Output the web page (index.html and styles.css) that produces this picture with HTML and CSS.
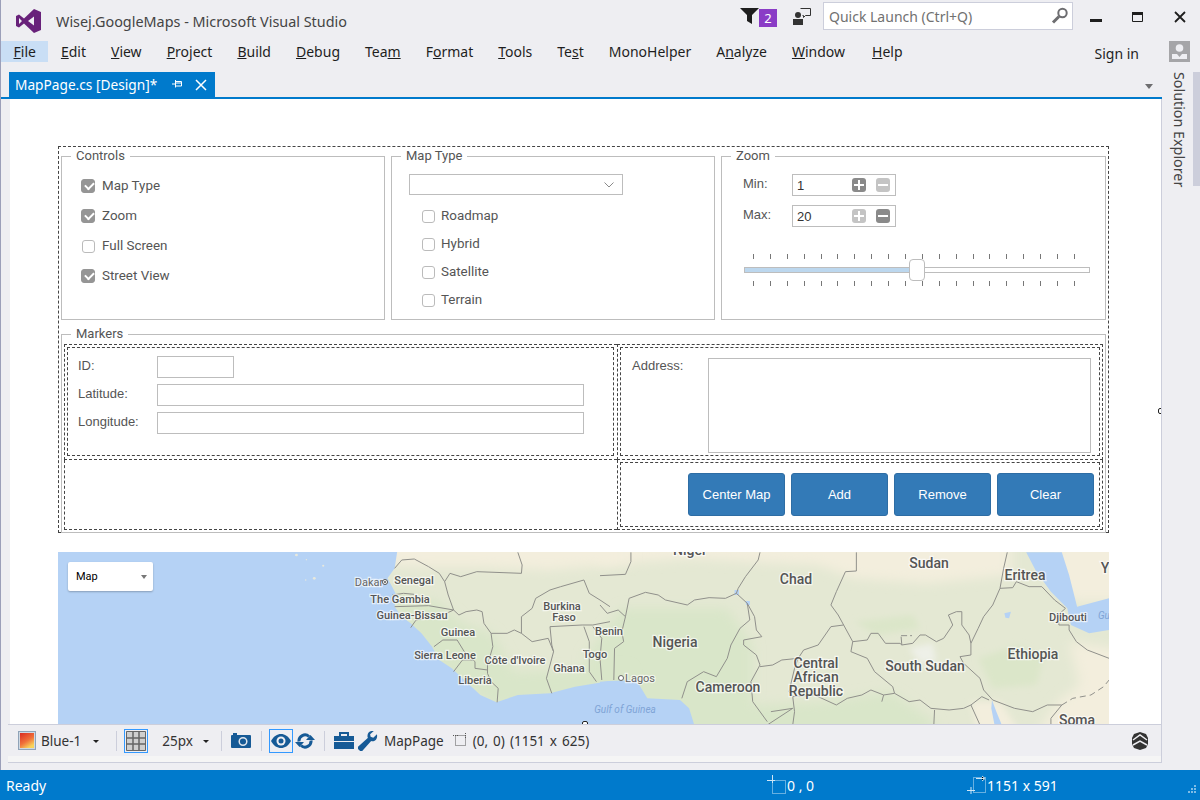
FILE: index.html
```html
<!DOCTYPE html>
<html lang="en">
<head>
<meta charset="utf-8">
<title>Wisej.GoogleMaps - Microsoft Visual Studio</title>
<link rel="stylesheet" href="styles.css">
</head>
<body>
<div class="window">
  <header class="titlebar">
    <svg class="vs-logo" width="28" height="28" viewBox="0 0 28 28"><path fill="#68217a" d="M2 9l3-1.500 5 4L20 2l7 3v18l-7 3-10-9.500-5 4-3-1.500zM5 11v6l3-3zM14 14l6 4.500v-9z"/></svg>
    <div class="app-title">Wisej.GoogleMaps - Microsoft Visual Studio</div>
    <div class="title-right">
      <svg class="ico-filter" width="19" height="18" viewBox="0 0 19 18"><path fill="#1e1e1e" d="M0 1h19l-7 7v9l-5-3V8z"/></svg>
      <span class="badge">2</span>
      <svg class="ico-feedback" width="18" height="18" viewBox="0 0 18 18"><circle cx="5" cy="8" r="3" fill="#333"/><path fill="#333" d="M0 12h10v6H0z"/><path fill="none" stroke="#333" d="M7.500 1.500h10v7h-5l-2 2v-2h-1"/></svg>
      <div class="quick"><span>Quick Launch (Ctrl+Q)</span><svg width="18" height="18" viewBox="0 0 18 18"><circle cx="11.500" cy="6" r="4.200" fill="none" stroke="#6d6d70" stroke-width="2"/><path stroke="#6d6d70" stroke-width="3" d="M8 9.500l-6 6"/></svg></div>
      <div class="win-btns">
        <svg width="12" height="12" viewBox="0 0 12 12"><path fill="#1e1e1e" d="M0 8h12v3H0z"/></svg>
        <svg width="12" height="12" viewBox="0 0 12 12"><path fill="none" stroke="#1e1e1e" d="M.5 2.500h10v8H.5z"/><path fill="#1e1e1e" d="M0 1h11v3H0z"/></svg>
        <svg width="12" height="12" viewBox="0 0 12 12"><path stroke="#1e1e1e" stroke-width="1.800" d="M1 1l10 10M11 1L1 11"/></svg>
      </div>
    </div>
  </header>

  <nav class="menubar">
    <span class="menu active"><u>F</u>ile</span>
    <span class="menu"><u>E</u>dit</span>
    <span class="menu"><u>V</u>iew</span>
    <span class="menu"><u>P</u>roject</span>
    <span class="menu"><u>B</u>uild</span>
    <span class="menu"><u>D</u>ebug</span>
    <span class="menu">Tea<u>m</u></span>
    <span class="menu">F<u>o</u>rmat</span>
    <span class="menu"><u>T</u>ools</span>
    <span class="menu">Te<u>s</u>t</span>
    <span class="menu">MonoHelper</span>
    <span class="menu">A<u>n</u>alyze</span>
    <span class="menu"><u>W</u>indow</span>
    <span class="menu help"><u>H</u>elp</span>
    <span class="signin">Sign in</span>
    <span class="avatar"><svg width="21" height="21" viewBox="0 0 21 21"><path fill="#a5a5a8" d="M0 0h21v21H0z"/><circle cx="10.500" cy="7" r="3.800" fill="#eeeef2"/><path fill="#eeeef2" d="M3 13h5l2.500 3 2.500-3h5v5H3z"/></svg></span>
  </nav>

  <div class="body">
    <main class="doc">
      <div class="tabs">
        <div class="tab"><span>MapPage.cs [Design]*</span>
          <svg class="tab-pin" width="11" height="11" viewBox="0 0 11 11"><path fill="none" stroke="#fff" d="M3.500 2.500h6v4.500h-6zM0 5h3.500M3.500 1v7.500M4 4h5"/></svg>
          <svg class="tab-close" width="12" height="12" viewBox="0 0 12 12"><path stroke="#fff" stroke-width="1.500" d="M1 1l10 10M11 1L1 11"/></svg>
        </div>
        <span class="tab-arrow"></span>
      </div>

      <div class="surface">
        <div class="form">
          <div class="top-groups">
            <fieldset class="group controls">
              <legend>Controls</legend>
              <label class="check on"><i></i>Map Type</label>
              <label class="check on"><i></i>Zoom</label>
              <label class="check"><i></i>Full Screen</label>
              <label class="check on"><i></i>Street View</label>
            </fieldset>
            <fieldset class="group maptype">
              <legend>Map Type</legend>
              <div class="combo"><svg width="10" height="6" viewBox="0 0 10 6"><path fill="none" stroke="#8a8a8a" d="M.5.500L5 5 9.500.500"/></svg></div>
              <label class="check"><i></i>Roadmap</label>
              <label class="check"><i></i>Hybrid</label>
              <label class="check"><i></i>Satellite</label>
              <label class="check"><i></i>Terrain</label>
            </fieldset>
            <fieldset class="group zoom">
              <legend>Zoom</legend>
              <div class="spin-row"><span class="spin-label">Min:</span>
                <div class="spin"><span class="spin-val">1</span>
                  <b class="sbtn"><svg width="10" height="10" viewBox="0 0 10 10"><path fill="#fff" d="M4 0h2v4h4v2H6v4H4V6H0V4h4z"/></svg></b>
                  <b class="sbtn off"><svg width="10" height="10" viewBox="0 0 10 10"><path fill="#fff" d="M0 4h10v2H0z"/></svg></b></div></div>
              <div class="spin-row"><span class="spin-label">Max:</span>
                <div class="spin"><span class="spin-val">20</span>
                  <b class="sbtn off"><svg width="10" height="10" viewBox="0 0 10 10"><path fill="#fff" d="M4 0h2v4h4v2H6v4H4V6H0V4h4z"/></svg></b>
                  <b class="sbtn"><svg width="10" height="10" viewBox="0 0 10 10"><path fill="#fff" d="M0 4h10v2H0z"/></svg></b></div></div>
              <div class="slider">
                <div class="ticks"><i></i><i></i><i></i><i></i><i></i><i></i><i></i><i></i><i></i><i></i><i></i><i></i><i></i><i></i><i></i><i></i><i></i><i></i><i></i><i></i></div>
                <div class="track"><div class="fill"></div><div class="thumb"></div></div>
                <div class="ticks"><i></i><i></i><i></i><i></i><i></i><i></i><i></i><i></i><i></i><i></i><i></i><i></i><i></i><i></i><i></i><i></i><i></i><i></i><i></i><i></i></div>
              </div>
            </fieldset>
          </div>

          <fieldset class="group markers">
            <legend>Markers</legend>
            <div class="m-grid">
              <div class="cell c1">
                <div class="panel p-fields">
                  <div class="f-row"><span class="f-label">ID:</span><span class="input short"></span></div>
                  <div class="f-row"><span class="f-label">Latitude:</span><span class="input"></span></div>
                  <div class="f-row"><span class="f-label">Longitude:</span><span class="input"></span></div>
                </div>
              </div>
              <div class="cell c2">
                <div class="panel p-addr"><span class="f-label addr">Address:</span><span class="input area"></span></div>
              </div>
              <div class="cell c3"></div>
              <div class="cell c4">
                <div class="panel p-btns">
                  <button class="btn">Center Map</button><button class="btn">Add</button><button class="btn">Remove</button><button class="btn">Clear</button>
                </div>
              </div>
            </div>
          </fieldset>
        </div>

        <div class="map">
          <svg class="map-svg" width="1051" height="173" viewBox="0 0 1051 173">
            <defs>
              <filter id="soft" x="-20%" y="-30%" width="140%" height="160%"><feGaussianBlur stdDeviation="16"/></filter>
              <filter id="soft2" x="-20%" y="-20%" width="140%" height="140%"><feGaussianBlur stdDeviation="9"/></filter>
            </defs>
            <rect class="sea" width="1051" height="173"/>
            <rect class="land" x="300" width="751" height="173"/>
            <!-- eastern land tones -->
            <g transform="translate(542 -7) scale(.36364 .33333)">
              <path class="desert" filter="url(#soft)" d="M-40 -40H1130V90L900 115L700 100L600 60L400 50L250 40L0 60z"/>
              <path class="desert" filter="url(#soft)" d="M1280 -40H1460V170H1300L1220 80z"/>
              <path class="desert" filter="url(#soft)" d="M1290 290L1460 320V600H1180L1260 470L1320 420z"/>
              <path class="desert" filter="url(#soft2)" d="M1020 470L1100 470L1160 570L1040 570z"/>
              <path class="forest" filter="url(#soft)" d="M60 190L350 190L420 300L420 480L620 470L800 440L920 530V600H-40V330z"/>
              <path class="forest2" filter="url(#soft2)" d="M1040 340L1150 300L1220 340L1200 420L1080 430z"/>
              <path class="forest2" filter="url(#soft2)" d="M700 230L860 210L880 250L760 270z"/>
              <path class="pale" filter="url(#soft2)" d="M850 310L915 295L925 350L880 355z"/>
            </g>
            <!-- western half -->
            <g transform="translate(-8 -7) scale(.35714 .33333)">
              <path class="desert" filter="url(#soft)" d="M940 -20H1620V55L1400 75L1200 65L1050 65L940 60z"/>
              <path class="forest" filter="url(#soft)" d="M950 140L1090 170L1150 230L1240 265L1300 380L1620 370V440L1250 490L1100 390L1000 250z"/>
              <path class="sea" d="M0 0H975L965 70L945 100L958 125L970 150L965 185L985 215L1010 235L1040 265L1070 305L1090 345L1125 370L1160 405L1205 450L1250 472L1310 450L1400 445L1470 425L1568 408V560H0z"/>
              <circle class="isle" cx="690" cy="30" r="4"/><circle class="isle" cx="718" cy="44" r="2"/><circle class="isle" cx="765" cy="62" r="3"/><circle class="isle" cx="740" cy="100" r="4"/><circle class="isle" cx="716" cy="105" r="2"/>
              <g class="borders">
                <path d="M965 70L985 45L1020 42L1060 65L1090 85L1105 110L1120 85L1150 95L1195 80L1320 85L1322 60L1310 22"/>
                <path d="M1105 110L1115 150L1130 195"/>
                <path d="M958 150L990 145L1020 148M968 168L1000 164"/>
                <path d="M965 185L1060 182L1130 195"/>
                <path d="M1010 248L1025 225L1075 215L1110 205L1130 195L1145 210L1165 200L1195 195L1210 200L1215 235L1235 265L1280 265L1300 255L1320 265"/>
                <path d="M1320 265L1320 215L1350 190L1360 160L1400 135L1430 125L1495 105L1510 145L1540 165L1568 185"/>
                <path d="M1320 265L1350 290L1395 280L1410 320L1400 360L1390 400L1405 445"/>
                <path d="M1400 245L1490 240L1520 240L1568 230"/>
                <path d="M1400 245L1405 300L1410 320M1495 245L1510 290L1510 380L1530 410M1520 245L1545 280L1540 340L1545 405"/>
                <path d="M1075 305L1100 285L1140 285L1160 320L1190 350L1190 370L1225 375M1130 380L1155 345L1185 345"/>
                <path d="M1235 265L1240 305L1225 360L1225 385L1235 410L1255 430L1252 472"/>
              </g>
            </g>
            <!-- eastern water and borders -->
            <g transform="translate(542 -7) scale(.36364 .33333)">
              <path class="sea" d="M0 410L27 408L100 405L130 460L220 465L245 490L265 560H0z"/>
              <path class="sea" d="M1172 22H1270L1290 90L1312 185L1400 160V255L1345 265L1295 240L1285 190L1240 140L1200 80z"/>
              <path class="sea" d="M1078 465L1090 500L1105 540L1085 540L1076 490z"/>
              <path class="sea" d="M370 135L382 135L382 150L370 150zM400 168L412 168L412 180L402 180zM1112 205L1130 200L1125 220L1115 218z"/>
              <g class="borders">
                <path d="M85 22L85 50L70 88L0 92"/>
                <path d="M0 180L20 205L50 195L70 215L80 160L125 142L160 150L180 165L240 180L260 165L300 158L345 160L375 145"/>
                <path d="M70 215L60 260L65 290L40 310L38 405"/>
                <path d="M440 22L435 45L400 95L380 130L375 145L405 175L412 225L385 250L360 300L350 340L320 395L285 380L240 410L225 460"/>
                <path d="M405 175L425 215L430 255L445 275L395 285L395 300L430 330L440 360L415 410L420 470L460 530"/>
                <path d="M440 365L475 360L500 345L545 340L560 315L600 300L635 245L670 240"/>
                <path d="M705 22L705 78L675 80L650 140L635 180L655 210L670 240L695 290"/>
                <path d="M695 290L735 285L745 265L765 265L785 295L825 295L830 300L860 295L880 270L895 270L925 290L945 280L970 240L958 210L980 200L995 200L995 240L1015 270L1020 295"/>
                <path d="M828 272h30" stroke-dasharray="6 3"/>
                <path d="M828 275L830 300"/>
                <path d="M1120 22L1110 70L1100 130L1080 180L1055 215L1040 250L1020 295L1020 330L990 335L1000 355L1045 400L1055 435L1080 465"/>
                <path d="M695 290L690 320L735 340L755 380L805 425L810 445L850 470L880 465L910 490L960 495L1000 490L1020 480L1050 455L1070 465"/>
                <path d="M530 455L590 450L650 480L680 460L720 450L745 435L780 450L810 445"/>
                <path d="M545 340L535 370L520 440L530 455L535 500L530 540M470 500L530 490L460 540"/>
                <path d="M1080 465L1140 490L1190 500L1230 480L1270 480L1240 520L1240 540"/>
                <path d="M1270 480L1300 460L1350 450L1385 425L1400 405" stroke-dasharray="6 4"/>
                <path d="M1100 130L1135 128L1145 110L1180 125L1215 125L1250 165L1280 190L1260 210L1262 240L1290 240L1290 255L1310 290L1340 315L1400 340"/>
                <path d="M920 495L918 540M1020 480L1045 540M780 450L775 470"/>
              </g>
            </g>
            <g class="places">
              <text class="sm gray" x="311" y="34">Dakar</text>
              <text class="sm" x="356" y="32">Senegal</text>
              <text class="sm" x="342" y="51">The Gambia</text>
              <text class="sm" x="354" y="67">Guinea-Bissau</text>
              <text class="sm" x="504" y="58">Burkina</text>
              <text class="sm" x="506" y="69">Faso</text>
              <text class="sm" x="551" y="83">Benin</text>
              <text class="sm" x="400" y="84">Guinea</text>
              <text class="sm" x="387" y="107">Sierra Leone</text>
              <text class="sm" x="457" y="112">Côte d'Ivoire</text>
              <text class="sm" x="537" y="106">Togo</text>
              <text class="sm" x="511" y="120">Ghana</text>
              <text class="sm" x="417" y="132">Liberia</text>
              <text class="sm gray" x="582" y="130">Lagos</text>
              <text class="lg" x="617" y="95">Nigeria</text>
              <text class="lg" x="632" y="3">Niger</text>
              <text class="lg" x="738" y="32">Chad</text>
              <text class="lg" x="871" y="16">Sudan</text>
              <text class="lg" x="967" y="28">Eritrea</text>
              <text class="lg" x="1047" y="21">Y</text>
              <text class="sm" x="1010" y="69">Djibouti</text>
              <text class="lg" x="975" y="107">Ethiopia</text>
              <text class="lg" x="758" y="116">Central</text>
              <text class="lg" x="758" y="130">African</text>
              <text class="lg" x="758" y="144">Republic</text>
              <text class="lg" x="867" y="119">South Sudan</text>
              <text class="lg" x="670" y="140">Cameroon</text>
              <text class="lg" x="1019" y="173">Soma</text>
              <text class="water" x="567" y="161">Gulf of Guinea</text>
              <text class="water" x="1046" y="67">Gu</text>
            </g>
            <circle class="city" cx="563" cy="126" r="2.500"/>
            <circle class="capital" cx="327" cy="30" r="2.500"/>
            <circle class="capital-dot" cx="327" cy="30" r="1"/>
          </svg>
          <div class="map-select"><span>Map</span><i></i></div>
        </div>
        <span class="handle h-right"></span>
        <span class="handle h-bottom"></span>
      </div>

      <div class="toolbar">
        <svg class="tb-theme" width="18" height="19" viewBox="0 0 18 19"><defs><linearGradient id="th" x1="0" y1="0" x2=".6" y2="1"><stop offset="0" stop-color="#d92b22"/><stop offset=".6" stop-color="#f0703a"/><stop offset="1" stop-color="#f8d35a"/></linearGradient></defs><rect x=".5" y=".5" width="17" height="18" fill="#cfd8e2" stroke="#8fa3b8"/><rect x="2" y="2" width="14" height="15" fill="url(#th)"/></svg>
        <span class="t-text tb-blue">Blue-1</span><span class="caret tb-caret1"></span>
        <span class="sep tb-sep1"></span>
        <span class="framed tb-grid"><svg width="20" height="20" viewBox="0 0 20 20"><path fill="#cfcfcf" d="M0 0h20v20H0z"/><path fill="none" stroke="#666" d="M.5.500h19v19H.5z"/><path fill="none" stroke="#666" stroke-width="1.500" d="M7 0v20M13 0v20M0 7h20M0 13h20"/></svg></span>
        <span class="t-text tb-px">25px</span><span class="caret tb-caret2"></span>
        <span class="sep tb-sep2"></span>
        <svg class="tb-cam" width="20" height="15" viewBox="0 0 20 15"><path fill="#165a96" d="M0 3a1 1 0 0 1 1-1h1V0h4v2h13a1 1 0 0 1 1 1v11a1 1 0 0 1-1 1H1a1 1 0 0 1-1-1z"/><circle cx="12" cy="8.500" r="3.800" fill="none" stroke="#dfe6ee" stroke-width="1.500"/></svg>
        <span class="sep tb-sep3"></span>
        <span class="framed tb-eye"><svg width="20" height="14" viewBox="0 0 20 14"><path fill="#165a96" d="M0 7C3 2 6 0 10 0s7 2 10 7c-3 5-6 7-10 7S3 12 0 7z"/><circle cx="10" cy="7" r="4.500" fill="#eeeef2"/><circle cx="10" cy="7" r="2.500" fill="#165a96"/></svg></span>
        <svg class="tb-refresh" width="20" height="18" viewBox="0 0 20 18"><path fill="none" stroke="#165a96" stroke-width="3" d="M4 9.500a6 6 0 0 1 10-5M16 8.500a6 6 0 0 1-10 5"/><path fill="#165a96" d="M11 8h9l-4.500-5zM0 10h9l-4.500 5z"/></svg>
        <span class="sep tb-sep4"></span>
        <svg class="tb-box" width="20" height="17" viewBox="0 0 20 17"><path fill="#165a96" d="M0 4h20v5H0zM0 10h20v7H0z"/><path fill="none" stroke="#165a96" stroke-width="2" d="M6 4V1h8v3"/></svg>
        <svg class="tb-wrench" width="20" height="20" viewBox="0 0 19 19"><path fill="#165a96" d="M18 3l-3.500 3.500L12 5.500 11.500 3 15 0c-3-.5-6 1-6 4.500 0 1 0 1.500.5 2L0 15v2l2 2h2l8.500-9.500c3 1 6.500-1.500 5.500-6.500z"/></svg>
        <span class="t-text tb-page">MapPage</span>
        <svg class="tb-rect" width="15" height="15" viewBox="0 0 15 15"><path fill="none" stroke="#555" stroke-dasharray="1 1" d="M2.500 2.500h10v10h-10z"/><path stroke="#555" stroke-dasharray="1 1" d="M0 2.500h5M12.500 0v5"/></svg>
        <span class="t-text tb-coords">(0, 0) (1151 x 625)</span>
        <svg class="tb-end" width="16" height="18" viewBox="0 0 16 18"><path fill="#333" d="M8 0l6 2 2 4v6l-2 4-6 2-6-2-2-4V6l2-4z"/><path fill="none" stroke="#eeeef2" stroke-width="1.500" d="M1 8l7-5 7 5M1 13l7-4 7 4"/></svg>
      </div>
      <div class="toolbar-foot"></div>
    </main>
    <aside class="side">
      <span class="side-label">Solution Explorer</span>
      <span class="side-strip"></span>
    </aside>
  </div>

  <footer class="status">
    <span class="st-ready">Ready</span>
    <span class="st-pos"><svg width="20" height="20" viewBox="0 0 20 20"><path fill="none" stroke="#cfe6f6" stroke-dasharray="1 1" d="M5.500 5.500h13v13h-13z"/><path stroke="#cfe6f6" d="M0 5.500h8M5.500 0v8"/></svg>0 , 0</span>
    <span class="st-size"><svg width="20" height="20" viewBox="0 0 20 20"><path fill="none" stroke="#cfe6f6" stroke-dasharray="1 1" d="M6.500 2.500h12v15h-12z"/><path stroke="#cfe6f6" d="M9 3.500h8M0 15.500h8M4 12v7M15 1l3 2.500-3 2.500"/></svg>1151 x 591</span>
    <svg class="grip" width="12" height="12" viewBox="0 0 12 12"><path fill="#7fbce6" d="M9 1h2v2H9zM6 4h2v2H6zM9 4h2v2H9zM3 7h2v2H3zM6 7h2v2H6zM9 7h2v2H9z"/></svg>
  </footer>
</div>
</body>
</html>
```

FILE: styles.css
```css
* { box-sizing: border-box; }
html, body { margin: 0; padding: 0; }
body { width: 1200px; height: 800px; overflow: hidden; background: #eeeef2; font-family: "Noto Sans", "Open Sans", sans-serif; color: #1e1e1e; }
.window { width: 1200px; height: 800px; display: flex; flex-direction: column; border-left: 1px solid #9b9fb9; }

.titlebar { height: 40px; display: flex; align-items: flex-start; flex: none; }
.vs-logo { margin: 7px 0 0 13px; }
.app-title { margin: 13px 0 0 14px; font-size: 14.400px; line-height: 18px; color: #444; }
.title-right { margin-left: auto; display: flex; align-items: flex-start; }
.ico-filter { margin-top: 7px; }
.badge { width: 18px; height: 18px; margin: 9px 0 0 0; background: #8a3cc6; color: #fff; font-size: 13px; line-height: 18px; text-align: center; }
.ico-feedback { margin: 7px 0 0 16px; }
.quick { width: 250px; height: 28px; margin: 2px 0 0 12px; background: #fff; border: 1px solid #cccedb; display: flex; align-items: center; justify-content: space-between; padding: 0 3px 0 5px; font-size: 14px; color: #717171; }
.win-btns { display: flex; gap: 30px; margin: 11px 0 0 17px; padding-right: 14px; }

.menubar { height: 30px; flex: none; display: flex; align-items: flex-start; font-size: 14px; color: #1e1e1e; }
.menu { height: 21px; line-height: 21px; padding: 0 12.500px; margin-top: 1px; }
.menu.active { background: #c9def5; }
.menu.help { margin-left: 2px; }
.signin { margin: 3px 0 0 auto; line-height: 21px; }
.avatar { margin: 1px 10px 0 30px; display: block; height: 21px; }

.body { flex: 1; display: flex; min-height: 0; }
.doc { width: 1161px; display: flex; flex-direction: column; }
.tabs { height: 29px; flex: none; display: flex; align-items: flex-end; padding-left: 8px; border-bottom: 2px solid #007acc; position: relative; }
.tab { width: 206px; height: 25px; background: #007acc; color: #fff; font-size: 13.700px; display: flex; align-items: center; padding-left: 6px; }
.tab-pin { margin-left: 15px; }
.tab-close { margin-left: 12px; }
.tab-arrow { position: absolute; right: 9px; top: 14px; border-style: solid; border-color: #6d6d70 transparent transparent; border-width: 5px 4.500px 0; }

.surface { flex: none; height: 625px; margin-left: 9px; background: #fff; position: relative; overflow: hidden; padding: 47px 0 0 48px; border-right: 1px solid #cccedb; }
.form { width: 1051px; height: 387px; border: 1px dashed #444; padding: 2px 2px 0 2px; font-family: Roboto, "Liberation Sans", sans-serif; font-size: 13.400px; color: #555; }
.top-groups { display: grid; grid-template-columns: 324px 324px 385px; gap: 6px; height: 178px; }
.group { margin: 0; min-width: 0; border: 1px solid #bdbdbd; padding: 0; }
.group legend { padding: 0 5px; font-size: 13px; line-height: 14px; height: 14px; color: #555; }
.controls { height: 171px; padding: 8px 0 0 20px; }
.controls legend { margin-left: -11px; }
.maptype { height: 171px; padding: 11px 0 0 17px; }
.maptype legend { margin-left: -8px; }
.zoom { height: 171px; padding: 11px 0 0 21px; }
.zoom legend { margin-left: -12px; }
.controls .check { height: 30px; }
.check { display: flex; align-items: center; gap: 7px; height: 28px; line-height: 28px; }
.check i { width: 13px; height: 13px; border: 1px solid #bbb; border-radius: 3px; background: #fff; flex: none; position: relative; }
.check.on i { width: 14px; height: 14px; margin-left: -1px; background: #959595; border-color: #959595; }
.check.on i::after { content: ""; position: absolute; left: 2.500px; top: 2px; width: 7px; height: 4px; border-left: 2px solid #fff; border-bottom: 2px solid #fff; transform: rotate(-45deg); }
.combo { width: 214px; height: 21px; border: 1px solid #bdbdbd; display: flex; align-items: center; justify-content: flex-end; padding-right: 8px; margin-bottom: 7px; }
.maptype .check { padding-left: 13px; gap: 6px; }

.spin-row { display: flex; align-items: flex-start; height: 31px; }
.spin-label { width: 49px; line-height: 20px; font-family: "Liberation Sans", sans-serif; font-size: 13px; }
.spin { width: 104px; height: 22px; border: 1px solid #bdbdbd; display: flex; align-items: center; padding-left: 4px; gap: 10px; color: #333; }
.spin-val { flex: 1; font-family: "Liberation Sans", sans-serif; font-size: 13px; }
.sbtn { width: 14px; height: 14px; border-radius: 3px; background: #8a8a8a; display: flex; align-items: center; justify-content: center; }
.sbtn:last-child { margin-right: 5px; }
.sbtn.off { background: #c4c4c4; }
.slider { width: 346px; margin: 18px 0 0 1px; }
.ticks { display: flex; justify-content: space-between; padding: 0 15px 0 9px; height: 5px; }
.ticks i { width: 1px; height: 5px; background: #777; }
.track { height: 6px; margin: 8px 0; border: 1px solid #bdbdbd; position: relative; background: #fff; }
.fill { width: 164px; height: 4px; background: #bcd7ee; }
.thumb { position: absolute; left: 164px; top: -9px; width: 16px; height: 22px; background: #fff; border: 1px solid #bdbdbd; border-radius: 4px; }

.markers { height: 206px; padding: 3px 2px 0 2px; }
.markers legend { margin-left: 7px; }
.m-grid { display: grid; grid-template-columns: 553px 486px; grid-template-rows: 116px 70px; font-family: "Liberation Sans", sans-serif; font-size: 13px; }
.cell { border: 1px dashed #444; }
.c1 { border-right: 0; padding: 2px 3px 3px 2px; }
.c2 { padding: 2px 2px 3px 2px; }
.c3 { border-right: 0; border-top: 0; }
.c4 { border-top: 0; padding: 2px; }
.panel { border: 1px dashed #444; height: 100%; }
.p-fields { padding: 8px 0 0 10px; }
.f-row { display: flex; align-items: flex-start; height: 28px; }
.f-label { width: 79px; line-height: 20px; flex: none; color: #555; }
.input { display: block; width: 427px; height: 22px; border: 1px solid #bdbdbd; background: #fff; }
.input.short { width: 77px; }
.p-addr { display: flex; padding: 10px 0 0 11px; }
.addr { width: 76px; line-height: 16px; }
.input.area { width: 383px; height: 95px; }
.p-btns { display: flex; justify-content: flex-end; gap: 6px; padding: 10px 5px 0 0; }
.btn { width: 97px; height: 43px; background: #337ab7; border: 1px solid #2e6da4; border-radius: 3px; color: #fff; font-family: "Liberation Sans", sans-serif; font-size: 13px; padding: 0; }

.map { width: 1051px; height: 173px; margin-top: 19px; position: relative; overflow: hidden; }
.map-svg { display: block; font-family: Roboto, sans-serif; }
.sea { fill: #b5d2f5; }
.land { fill: #e4e8d3; }
.desert { fill: #f3eedd; }
.forest { fill: #d9e6c9; }
.forest2 { fill: #dbe6c9; }
.pale { fill: #eef0e8; }
.isle { fill: #e8e8dc; }
.borders path { fill: none; stroke: #90908b; stroke-width: 1; vector-effect: non-scaling-stroke; }
.places text { text-anchor: middle; fill: #555; font-weight: 500; paint-order: stroke; stroke: rgba(255,255,255,.65); stroke-width: 2.500px; }
.places .sm { font-size: 11px; }
.places .lg { font-size: 14px; }
.places .gray { fill: #666; font-weight: 400; }
.places .water { font-size: 10px; font-style: italic; fill: #7fa4d6; stroke: none; font-weight: 400; }
.city { fill: #fff; stroke: #666; }
.capital { fill: #fff; stroke: #555; stroke-width: 1; }
.capital-dot { fill: #555; }
.map-select { position: absolute; left: 10px; top: 10px; width: 85px; height: 29px; background: #fff; border-radius: 2px; box-shadow: 0 1px 2px rgba(0,0,0,.25); display: flex; align-items: center; justify-content: space-between; padding: 0 6px 0 8px; font: 400 11px Roboto, sans-serif; color: #000; }
.map-select i { border-style: solid; border-color: #777 transparent transparent; border-width: 4px 3.500px 0; margin-top: 1px; }

.handle { position: absolute; width: 6px; height: 6px; background: #fff; border: 1px solid #222; border-radius: 2px; }
.h-right { right: -3px; top: 309px; }
.h-bottom { left: 572px; bottom: -3px; }

.toolbar { height: 32px; flex: none; margin-left: 7px; background: #eeeef2; display: flex; align-items: center; padding-left: 10px; font-size: 13.500px; border-top: 1px solid #cccedb; border-right: 1px solid #cccedb; }
.t-text { color: #333; }
.caret { width: 0; height: 0; border-style: solid; border-color: #222 transparent transparent; border-width: 3px 3px 0; margin-top: 2px; flex: none; }
.sep { width: 1px; height: 20px; background: #cccedb; flex: none; }
.framed { width: 24px; height: 24px; border: 1px solid #3399ff; display: flex; align-items: center; justify-content: center; flex: none; }
.tb-blue { margin-left: 5px; }
.tb-caret1 { margin-left: 12px; }
.tb-sep1 { margin: 0 7px 0 17px; }
.tb-px { margin-left: 14px; }
.tb-caret2 { margin-left: 10px; }
.tb-sep2 { margin: 0 9px 0 12px; }
.tb-sep3 { margin: 0 7px 0 10px; }
.tb-refresh { margin-left: 2px; }
.tb-sep4 { margin: 0 9px 0 9px; }
.tb-wrench { margin-left: 4px; }
.tb-page { margin-left: 6px; }
.tb-rect { margin-left: 9px; }
.tb-coords { margin-left: 5px; word-spacing: 1.500px; }
.tb-end { margin: 0 13px 0 auto; }
.toolbar-foot { height: 7px; flex: none; margin-left: 7px; background: #f5f5f5; border-bottom: 1px solid #cccedb; border-right: 1px solid #cccedb; }

.side { flex: 1; position: relative; display: flex; justify-content: flex-start; }
.side-label { writing-mode: vertical-rl; font-size: 14.300px; color: #444; height: 116px; margin: 2px 0 0 9px; line-height: 16px; }
.side-strip { position: absolute; right: 0; top: 2px; width: 7px; height: 114px; background: #cccedb; }

.status { height: 30px; flex: none; margin-left: -1px; background: #007acc; color: #fff; display: flex; align-items: center; font-size: 14px; position: relative; }
.st-ready { margin-left: 6px; }
.st-pos { position: absolute; left: 767px; display: flex; align-items: center; }
.st-size { position: absolute; left: 967px; display: flex; align-items: center; }
.grip { position: absolute; right: 3px; bottom: 4px; }
```
